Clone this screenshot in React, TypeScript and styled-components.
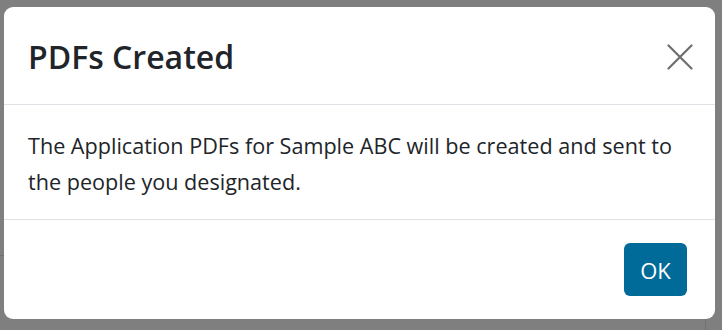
import React from 'react'
import styled, { createGlobalStyle } from 'styled-components'

const GlobalStyle = createGlobalStyle`
  html, body {
    margin: 0;
    padding: 0;
    width: 722px;
    height: 330px;
    overflow: hidden;
    background: #ffffff;
  }

  * {
    box-sizing: border-box;
  }
`

const Page = styled.div`
  position: relative;
  width: 722px;
  height: 330px;
  overflow: hidden;
  font-family: "Open Sans", "Noto Sans", sans-serif;
  color: #212529;
`

// what sits behind the backdrop: only a couple of table rules peek out
const BehindTable = styled.div`
  padding-top: 255px;
  padding-right: 16px;
`

const BehindRow = styled.div`
  height: 75px;
  border-top: 1px solid #dee2e6;
  border-right: 1px solid #dee2e6;
`

const Backdrop = styled.div`
  position: absolute;
  inset: 0;
  background: rgba(0, 0, 0, 0.5);
  padding: 7px 7px 0 4px;
`

const Dialog = styled.div`
  width: 711px;
  background: #ffffff;
  border-radius: 9px;
  display: flex;
  flex-direction: column;
  overflow: hidden;
`

const Header = styled.div`
  display: flex;
  align-items: center;
  justify-content: space-between;
  padding: 25px 20px 23px 24px;
  height: 98px;
  border-bottom: 1px solid #dee2e6;
`

const Title = styled.h5`
  margin: 0;
  font-size: 32px;
  font-weight: 600;
  line-height: 1.5;
  color: #212529;
`

const CloseButton = styled.button`
  width: 30px;
  height: 30px;
  padding: 0;
  border: none;
  background: transparent;
  display: flex;
  align-items: center;
  justify-content: center;
  cursor: pointer;
  color: #6e6e6e;
`

const Body = styled.div`
  padding: 23px 24px 0;
  height: 115px;
  border-bottom: 1px solid #dee2e6;
`

const Message = styled.p`
  margin: 0;
  font-size: 21.6px;
  line-height: 36px;
  color: #212529;
`

const Footer = styled.div`
  display: flex;
  justify-content: flex-end;
  padding: 23px 28px 23px;
`

const OkButton = styled.button`
  width: 63px;
  height: 53px;
  border: none;
  border-radius: 6px;
  background: #006b99;
  color: #ffffff;
  font-family: inherit;
  font-size: 22px;
  cursor: pointer;
`

const CloseIcon = () => (
  <svg width="26" height="26" viewBox="0 0 26 26" fill="none">
    <path d="M1.5 1.5 L24.5 24.5 M24.5 1.5 L1.5 24.5" stroke="currentColor" strokeWidth="2.2" strokeLinecap="round" />
  </svg>
)

export default function App() {
  return (
    <Page>
      <GlobalStyle />
      <BehindTable>
        <BehindRow />
      </BehindTable>
      <Backdrop>
        <Dialog role="dialog" aria-labelledby="pdfs-created-title">
          <Header>
            <Title id="pdfs-created-title">PDFs Created</Title>
            <CloseButton aria-label="Close">
              <CloseIcon />
            </CloseButton>
          </Header>
          <Body>
            <Message>
              The Application PDFs for Sample ABC will be created and sent to the people you designated.
            </Message>
          </Body>
          <Footer>
            <OkButton>OK</OkButton>
          </Footer>
        </Dialog>
      </Backdrop>
    </Page>
  )
}
